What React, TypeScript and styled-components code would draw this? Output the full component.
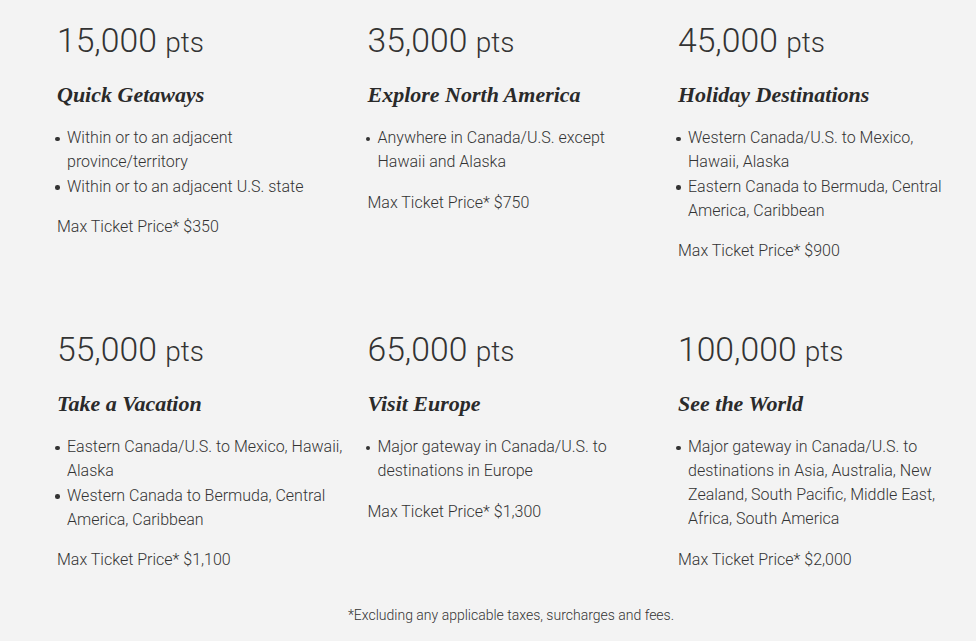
import React from "react";
import styled, { createGlobalStyle } from "styled-components";

const Global = createGlobalStyle`
  html, body { margin: 0; padding: 0; background: #f3f3f3; }
  body { font-family: Roboto, "Noto Sans", Arial, sans-serif; color: #333; }
`;

const Page = styled.div`
  width: 908px;
  padding: 21px 0 0 57px;
`;

const Grid = styled.div`
  display: grid;
  grid-template-columns: repeat(3, 287px);
  column-gap: 23.5px;
  row-gap: 67px;
`;

const Card = styled.section`
  display: flex;
  flex-direction: column;
`;

const Points = styled.div`
  font-size: 33.7px;
  font-weight: 300;
  line-height: 40px;
  color: #333;
  span {
    font-size: 28px;
  }
`;

const Title = styled.h3`
  margin: 18px 0 0;
  font-family: Georgia, "Liberation Serif", serif;
  font-style: italic;
  font-weight: 700;
  font-size: 22px;
  line-height: 28px;
  color: #2a2a2a;
`;

const List = styled.ul`
  margin: 17px 0 0;
  padding: 0 0 0 10px;
  list-style: none;
`;

const Item = styled.li`
  position: relative;
  font-size: 16px;
  font-weight: 300;
  line-height: 24px;
  margin-bottom: 0.5px;
  &::before {
    content: "";
    position: absolute;
    left: -12px;
    top: 10.5px;
    width: 4.5px;
    height: 4.5px;
    border-radius: 50%;
    background: #333;
  }
`;

const Price = styled.p`
  margin: 16px 0 0;
  font-size: 16px;
  font-weight: 300;
  line-height: 24px;
`;

const Footer = styled.p`
  margin: 33px 0 0;
  text-align: center;
  font-size: 14px;
  font-weight: 300;
  line-height: 20px;
`;

const data = [
  {
    pts: "15,000",
    title: "Quick Getaways",
    items: ["Within or to an adjacent province/territory", "Within or to an adjacent U.S. state"],
    price: "$350",
  },
  {
    pts: "35,000",
    title: "Explore North America",
    items: ["Anywhere in Canada/U.S. except Hawaii and Alaska"],
    price: "$750",
  },
  {
    pts: "45,000",
    title: "Holiday Destinations",
    items: [
      "Western Canada/U.S. to Mexico, Hawaii, Alaska",
      "Eastern Canada to Bermuda, Central America, Caribbean",
    ],
    price: "$900",
  },
  {
    pts: "55,000",
    title: "Take a Vacation",
    items: [
      "Eastern Canada/U.S. to Mexico, Hawaii, Alaska",
      "Western Canada to Bermuda, Central America, Caribbean",
    ],
    price: "$1,100",
  },
  {
    pts: "65,000",
    title: "Visit Europe",
    items: ["Major gateway in Canada/U.S. to destinations in Europe"],
    price: "$1,300",
  },
  {
    pts: "100,000",
    title: "See the World",
    items: [
      "Major gateway in Canada/U.S. to destinations in Asia, Australia, New Zealand, South Pacific, Middle East, Africa, South America",
    ],
    price: "$2,000",
  },
];

export default function App() {
  return (
    <>
      <Global />
      <Page>
        <Grid>
          {data.map((d) => (
            <Card key={d.pts}>
              <Points>
                {d.pts} <span>pts</span>
              </Points>
              <Title>{d.title}</Title>
              <List>
                {d.items.map((it) => (
                  <Item key={it}>{it}</Item>
                ))}
              </List>
              <Price>Max Ticket Price* {d.price}</Price>
            </Card>
          ))}
        </Grid>
        <Footer>*Excluding any applicable taxes, surcharges and fees.</Footer>
      </Page>
    </>
  );
}
